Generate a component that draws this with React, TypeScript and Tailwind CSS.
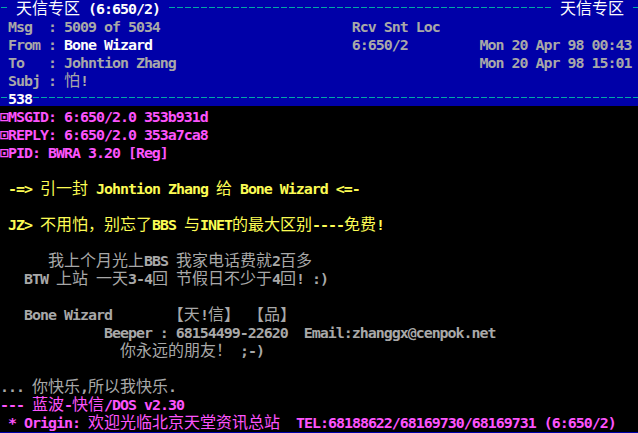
import React from 'react';

// one text cell is 8px wide, 18px tall; CJK glyphs take two cells
type Seg = [string, string];

const GRAY = 'text-[#a8a8a8]';
const WHITE = 'text-[#fcfcfc]';
const MAG = 'text-[#fc54fc]';
const YEL = 'text-[#fcfc54]';

const isWide = (ch: string) => ch.charCodeAt(0) >= 0x2e80;

function Txt({ s, className }: { s: string; className?: string }) {
  const parts: { wide: boolean; text: string }[] = [];
  for (const ch of s) {
    const wide = isWide(ch);
    const last = parts[parts.length - 1];
    if (last && last.wide === wide) last.text += ch;
    else parts.push({ wide, text: ch });
  }
  return (
    <span className={className}>
      {parts.map((p, i) =>
        p.wide ? (
          <span
            key={i}
            className="font-['Noto_Sans_CJK_SC',sans-serif] font-normal text-[16px] leading-[12px] tracking-normal"
          >
            {p.text}
          </span>
        ) : (
          <React.Fragment key={i}>{p.text}</React.Fragment>
        )
      )}
    </span>
  );
}

function Dash({ className }: { className: string }) {
  return (
    <span className={`${className} block h-[18px] shrink-0`}>
      <span className="block mt-[7px] h-px bg-[repeating-linear-gradient(90deg,transparent_0px,transparent_1px,#00a8a8_1px,#00a8a8_7px,transparent_7px,transparent_8px)]" />
    </span>
  );
}

function Row({ segs }: { segs: Seg[] }) {
  return (
    <div className="h-[18px] whitespace-pre">
      {segs.map(([t, c], i) => (
        <Txt key={i} s={t} className={c} />
      ))}
    </div>
  );
}

const header: Seg[][] = [
  [[' Msg  : 5009 of 5034' + ' '.repeat(24) + 'Rcv Snt Loc', GRAY]],
  [
    [' From : ', GRAY],
    ['Bone Wizard', WHITE],
    [' '.repeat(25) + '6:650/2' + ' '.repeat(9) + 'Mon 20 Apr 98 00:43', GRAY],
  ],
  [[' To   : Johntion Zhang' + ' '.repeat(38) + 'Mon 20 Apr 98 15:01', GRAY]],
  [[' Subj : 怕!', GRAY]],
];

const body: Seg[][] = [
  [['⊡MSGID: 6:650/2.0 353b931d', MAG]],
  [['⊡REPLY: 6:650/2.0 353a7ca8', MAG]],
  [['⊡PID: BWRA 3.20 [Reg]', MAG]],
  [],
  [[' -=> 引一封 Johntion Zhang 给 Bone Wizard <=-', YEL]],
  [],
  [[' JZ> 不用怕，别忘了BBS 与INET的最大区别----免费!', YEL]],
  [],
  [['      我上个月光上BBS 我家电话费就2百多', GRAY]],
  [['   BTW 上站 一天3-4回 节假日不少于4回! :)', GRAY]],
  [],
  [['   Bone Wizard       【天!信】 【品】', GRAY]],
  [['             Beeper : 68154499-22620  Email:zhanggx@cenpok.net', GRAY]],
  [['               你永远的朋友！ ;-)', GRAY]],
  [],
  [['... 你快乐,所以我快乐.', GRAY]],
  [['--- 蓝波-快信/DOS v2.30', MAG]],
  [[' * Origin: 欢迎光临北京天堂资讯总站  TEL:68188622/68169730/68169731 (6:650/2)', MAG]],
];

export default function App() {
  return (
    <div className="w-[638px] h-[433px] overflow-hidden bg-black flex flex-col font-['DejaVu_Sans_Mono',monospace] font-bold text-[14.95px] leading-[18px] tracking-[-1px]">
      <div className="w-[640px] h-[106px] shrink-0 overflow-hidden bg-[#0000a8]">
        <div className="flex h-[18px] whitespace-pre">
          <Dash className="w-[8px]" />
          <Txt s=" 天信专区 (6:650/2) " className={WHITE} />
          <Dash className="flex-1" />
          <Txt s=" 天信专区 " className={WHITE} />
          <Dash className="w-[8px]" />
        </div>
        {header.map((segs, i) => (
          <Row key={i} segs={segs} />
        ))}
        <div className="flex h-[18px] whitespace-pre">
          <Dash className="w-[8px]" />
          <Txt s="538" className={WHITE} />
          <Dash className="flex-1" />
        </div>
      </div>
      <div className="w-[640px] mt-[2px] shrink-0">
        {body.map((segs, i) => (
          <Row key={i} segs={segs} />
        ))}
      </div>
      <div className="flex-1 bg-[#0000a8]" />
    </div>
  );
}
